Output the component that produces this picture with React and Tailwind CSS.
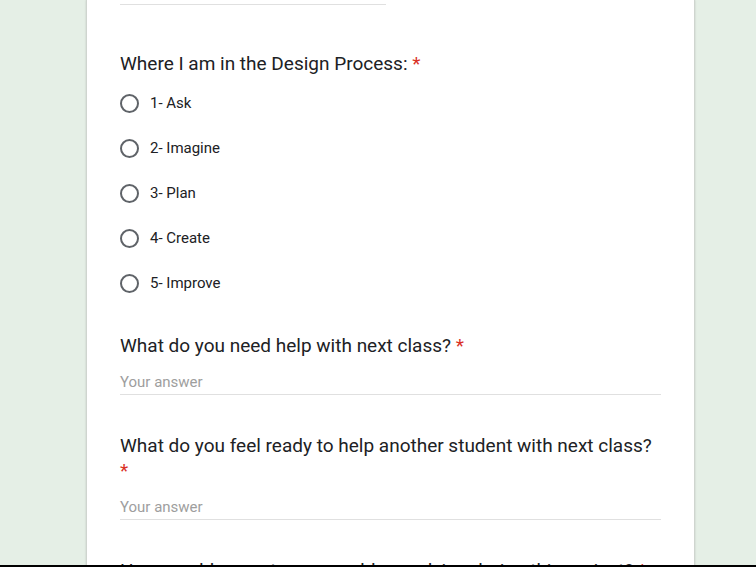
import React from "react";

const steps = ["1- Ask", "2- Imagine", "3- Plan", "4- Create", "5- Improve"];

const Question = ({ title, className = "" }) => (
  <div className={`text-[19px] leading-[25px] text-[#202124] ${className}`}>
    {title} <span className="text-[#d93025]">*</span>
  </div>
);

const AnswerInput = () => (
  <div className="mt-[14px] w-[541px] border-b border-[#e0e0e0] pb-[2px] text-[15px] leading-[20px] text-[#9e9e9e]">
    Your answer
  </div>
);

export default function App() {
  return (
    <div
      className="relative h-[567px] overflow-hidden bg-[#e5efe6]"
      style={{ fontFamily: "Roboto, 'Noto Sans', sans-serif" }}
    >
      <div className="ml-[86px] h-full w-[609px] border-x border-[#cfd5cf] bg-white pl-[33px] shadow-[0_0_2px_rgba(0,0,0,0.15)]">
        {/* previous field underline */}
        <div className="h-[5px] w-[266px] border-b border-[#e0e0e0]" />

        <Question title="Where I am in the Design Process:" className="mt-[46px]" />
        <div className="mt-[5px] flex flex-col">
          {steps.map((s) => (
            <div key={s} className="flex h-[45px] items-center">
              <span className="h-[19px] w-[19px] rounded-full border-2 border-[#5f6368]" />
              <span className="ml-[11px] text-[15px] text-[#202124]">{s}</span>
            </div>
          ))}
        </div>

        <Question title="What do you need help with next class?" className="mt-[27px]" />
        <AnswerInput />

        <Question
          title="What do you feel ready to help another student with next class?"
          className="mt-[38px] w-[541px]"
        />
        <AnswerInput />

        <Question
          title="How would you rate your problem solving during this project?"
          className="mt-[38px] w-[541px]"
        />
      </div>
      <div className="absolute inset-x-0 bottom-0 h-[2px] bg-black" />
    </div>
  );
}
